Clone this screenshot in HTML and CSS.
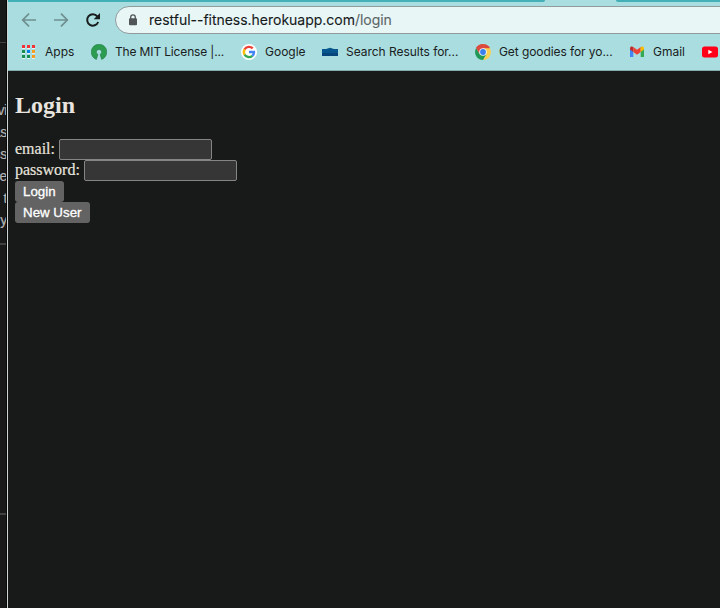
FILE: index.html
```html
<!DOCTYPE html>
<html lang="en">
<head>
<meta charset="utf-8">
<title>Login</title>
<link rel="stylesheet" href="styles.css">
</head>
<body>
<div class="desktop">
  <aside class="behind">
    <div class="behind-top"></div>
    <div class="behind-lines"><span>vi</span><span>as</span><span>ss</span><span>he</span><span>t</span><span>y</span></div>
    <div class="behind-card"></div>
  </aside>
  <div class="window">
    <div class="tabs"><i class="tab-left"></i><i class="tab-right"></i></div>
    <div class="toolbar">
      <svg class="nav" viewBox="0 0 16 16"><path d="M15 8H2M8 1.7 1.7 8 8 14.3" fill="none" stroke="#6f8e90" stroke-width="1.7"/></svg>
      <svg class="nav" viewBox="0 0 16 16"><path d="M1 8h13M8 1.7 14.3 8 8 14.3" fill="none" stroke="#6f8e90" stroke-width="1.7"/></svg>
      <svg class="nav" viewBox="0 0 16 16"><path d="M13.2 10A5.7 5.7 0 1 1 12.3 4.3L14 6" fill="none" stroke="#191d1e" stroke-width="2"/><path d="M15 1v6.3H8.7z" fill="#191d1e"/></svg>
      <div class="address">
        <svg class="lock" viewBox="0 0 10 12"><path d="M2.7 5V3.2a2.3 2.3 0 0 1 4.6 0V5" fill="none" stroke="#505658" stroke-width="1.3"/><rect x="1" y="4.2" width="8" height="7" rx="1" fill="#505658"/></svg>
        <span class="url">restful--fitness.herokuapp.com<span class="path">/login</span></span>
      </div>
    </div>
    <nav class="bookmarks">
      <a class="mark apps"><svg viewBox="0 0 16 16"><path fill="#e3f4f4" d="M1 4h3v1H1zm5 0h3v1H6zm5 0h3v1h-3zM1 9h3v1H1zm5 0h3v1H6zm5 0h3v1h-3zM1 14h3v1H1zm5 0h3v1H6zm5 0h3v1h-3z"/><path fill="#f23439" d="M1 1h3v3H1zm5 0h3v3H6zm5 0h3v3h-3z"/><path fill="#188f51" d="M1 6h3v3H1zm0 5h3v3H1zm5 0h3v3H6z"/><path fill="#087fe5" d="M6 6h3v3H6z"/><path fill="#f69c23" d="M11 6h3v3h-3zm0 5h3v3h-3z"/></svg><span>Apps</span></a>
      <a class="mark mit"><svg viewBox="0 0 16 16"><path d="M5.4 15.4A7.8 7.8 0 1 1 10.6 15.4L9.1 10.4a2.6 2.6 0 1 0-2.2 0z" fill="#2b9c50" stroke="#1b713c" stroke-width=".5"/></svg><span>The MIT License |...</span></a>
      <a class="mark google"><svg viewBox="0 0 16 16"><circle cx="8" cy="8" r="8" fill="#fff"/><g fill="none" stroke-width="2.4"><path d="M3.6 5.4A5.1 5.1 0 0 1 11.7 4.4" stroke="#ea4335"/><path d="M3.6 5.4a5.1 5.1 0 0 0 0 5.2" stroke="#fbbc05"/><path d="M3.6 10.6a5.1 5.1 0 0 0 7.8 1.2" stroke="#34a853"/><path d="M11.4 11.8A5.1 5.1 0 0 0 13 8H8" stroke="#4285f4"/></g></svg><span>Google</span></a>
      <a class="mark search"><svg viewBox="0 0 16 16"><path d="M0 5h4l4-1.3L12 5h4v7H0z" fill="#07568e"/><path d="M0 9h16v3H0z" fill="#06467c"/></svg><span>Search Results for...</span></a>
      <a class="mark chrome"><svg viewBox="0 0 16 16"><path d="M8 8 1.1 4A8 8 0 0 1 14.9 4z" fill="#dc493d"/><path d="M8 8V0L14.9 4A8 8 0 0 1 8 16l3.4-6z" fill="#fbcf4f"/><path d="M1.1 4A8 8 0 0 0 8 16l3.4-6H4.6z" fill="#209957"/><path d="M8 4.2h6.9A8 8 0 0 0 1.1 4l3.5 6z" fill="#dc493d"/><circle cx="8" cy="8" r="3.8" fill="#eef4ff"/><circle cx="8" cy="8" r="2.9" fill="#397fed"/></svg><span>Get goodies for yo...</span></a>
      <a class="mark gmail"><svg viewBox="0 0 16 16"><path d="M0 4v9h3.3V7z" fill="#4285f4"/><path d="M10.7 7v6H14V4z" fill="#34a853"/><path d="M0 4.3C0 2.3 2.2 2.1 3.3 3v5L0 5.6z" fill="#bd2e2b"/><path d="M3.3 3 7 5.8 10.7 3v5L7 10.8 3.3 8z" fill="#ea4335"/><path d="M10.7 3c1.1-.9 3.3-.7 3.3 1.3v1.3L10.7 8z" fill="#fbbc04"/></svg><span>Gmail</span></a>
      <a class="mark youtube"><svg viewBox="0 0 16 16"><rect y="2.5" width="16" height="11" rx="2.5" fill="#ff0018"/><path d="m6.3 5.7 4.2 2.3-4.2 2.3z" fill="#fff"/></svg></a>
    </nav>
    <main>
      <h1>Login</h1>
      <form>
        <div class="row"><label for="email">email:</label><input id="email" type="text"></div>
        <div class="row"><label for="password">password:</label><input id="password" type="password"></div>
        <button class="login" type="button">Login</button>
        <button class="new-user" type="button">New User</button>
      </form>
    </main>
  </div>
</div>
</body>
</html>
```
FILE: styles.css
```css
* { box-sizing: border-box; }
body { margin: 0; background: #181a19; overflow: hidden; }
.desktop { display: flex; width: 720px; height: 608px; }
.behind { width: 7px; height: 608px; flex: none; overflow: hidden; background: #191919; border-right: 1px solid #080808; color: #b4b4b4; font: 14px/22px "Liberation Sans", sans-serif; }
.behind-top { height: 43px; border-bottom: 1px solid #414141; }
.behind-lines { height: 202px; padding-top: 56px; border-bottom: 2px solid #414141; }
.behind-lines span { display: flex; justify-content: flex-end; width: 7px; height: 22px; letter-spacing: -0.3px; -webkit-text-stroke: 0.2px; }
.behind-card { height: 270px; border-bottom: 2px solid #414141; }
.window { width: 713px; flex: none; border-left: 1px solid #d0d4d4; overflow: hidden; background: #181a19; }
.tabs { height: 2px; display: flex; justify-content: space-between; background: #a9dddf; }
.tabs i { height: 2px; background: #43afb6; }
.tab-left { width: 537px; border-bottom-right-radius: 3px 2px; }
.tab-right { width: 104px; border-bottom-left-radius: 3px 2px; }
.toolbar { display: flex; align-items: center; height: 36px; padding-left: 13px; background: #a9dddf; }
.nav { width: 16px; height: 16px; margin-right: 16px; flex: none; }
.address { display: flex; align-items: center; width: 640px; height: 28px; flex: none; margin-left: -2px; border: 1px solid #919b9c; border-radius: 14px; background: #e8f6f6; }
.lock { width: 10px; height: 12px; margin-left: 12px; flex: none; }
.url { margin-left: 11px; font: 14px/20px Inter, sans-serif; letter-spacing: -0.02px; color: #15191a; -webkit-text-stroke: 0.1px; white-space: nowrap; }
.path { color: #5c6566; }
.bookmarks { display: flex; align-items: center; height: 33px; padding: 0 0 5px 13px; border-bottom: 1px solid #84abad; background: #a9dddf; }
.mark { display: flex; align-items: center; flex: none; font: 12px/16px Inter, sans-serif; color: #192021; white-space: nowrap; }
.mark svg { width: 16px; height: 16px; flex: none; margin-right: 8px; }
.apps { width: 70px; }
.mit { width: 150px; letter-spacing: -0.15px; }
.google { width: 81px; }
.search { width: 153px; letter-spacing: -0.04px; }
.chrome { width: 155px; letter-spacing: -0.08px; }
.gmail { width: 72px; }
.gmail svg { margin-right: 7px; }
main { padding: 20px 0 0 7px; color: #e8e4df; font: 16px/21px "Liberation Serif", serif; }
h1 { margin: 0 0 20px; font-size: 24px; line-height: 28px; font-weight: bold; }
.row { display: flex; height: 21px; }
label { margin-right: 4px; line-height: 19px; -webkit-text-stroke: 0.2px; }
input { width: 153px; height: 21px; padding: 1px 2px; border: 1px solid #858585; border-radius: 2px; background: #363636; color: #fff; }
button { display: block; height: 21px; padding: 0 0 0 8px; border: 0; border-radius: 3px; background: #636363; color: #fff; font: 13.333px/21px "Liberation Sans", sans-serif; -webkit-text-stroke: 0.3px; text-align: left; }
.login { width: 49px; }
.new-user { width: 75px; }
```
